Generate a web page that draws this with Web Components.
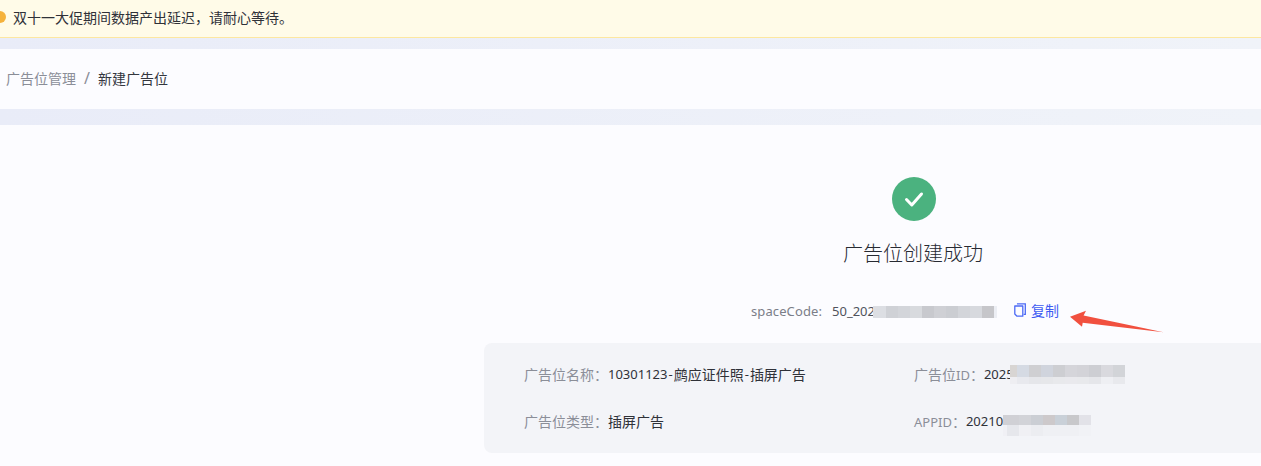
<!DOCTYPE html>
<html><head><meta charset="utf-8">
<style>
html,body{margin:0;padding:0;background:#fcfcff;}
body{width:1261px;height:466px;overflow:hidden;font-family:"Noto Sans","Noto Sans CJK SC",sans-serif;}
</style></head>
<body>
<app-page></app-page>
<script>
const FONT='"Noto Sans","Noto Sans CJK SC",sans-serif';
function def(name,html,init){
  customElements.define(name,class extends HTMLElement{
    constructor(){super();this.attachShadow({mode:'open'}).innerHTML=html;}
    connectedCallback(){if(init)init.call(this);}
  });
}
def('notice-bar',`<style>
:host{display:flex;align-items:center;gap:7px;box-sizing:border-box;height:38px;padding-bottom:3px;background:#fffbe8;border-bottom:1px solid #fde7a0;font:14px ${FONT};color:#2f3138;overflow:hidden}
i{display:block;width:12px;height:12px;border-radius:50%;background:#f5b23c;margin-left:-6px;flex:none}
</style><i></i><slot></slot>`);
def('band-gap',`<style>:host{display:block;height:var(--h,11px);background:linear-gradient(90deg,#e9ecf8,#f0f3f9)}</style>`);
def('bread-crumb',`<style>
:host{display:flex;align-items:center;box-sizing:border-box;height:60px;padding:0 0 2px 6px;background:#fcfcff;font:14px ${FONT};color:#8b8e98}
span.s{margin:0 8px;width:6px;text-align:center;font-size:16px;line-height:16px}
b{font-weight:400;color:#33363e}
</style>广告位管理<span class="s">/</span><b>新建广告位</b>`);
def('pixel-blur',`<style>
:host{display:block;flex:none}
div{display:flex}
i{display:block}
</style><span id="r"></span>`,function(){
  const r=this.shadowRoot.getElementById('r');
  r.style.display='contents';
  JSON.parse(this.getAttribute('data')).forEach(row=>{
    const d=document.createElement('div');d.style.height=row.h+'px';
    row.c.forEach(([w,c])=>{const i=document.createElement('i');i.style.width=w+'px';i.style.background=c;d.appendChild(i);});
    r.appendChild(d);
  });
});
def('result-head',`<style>
:host{display:flex;flex-direction:column;align-items:center}
svg{display:block}
h2{margin:18px 2px 2px 0;font:300 20px/30px ${FONT};color:#272a32}
</style>
<svg width="44" height="44" viewBox="0 0 44 44"><circle cx="22" cy="22" r="22" fill="#4bb27f"/><path d="M14.5 22.5l5.3 5.5 9.7-11" fill="none" stroke="#fff" stroke-width="3" stroke-linecap="round" stroke-linejoin="round"/></svg>
<h2><slot></slot></h2>`);
def('code-line',`<style>
:host{display:flex;align-items:center;justify-content:center;box-sizing:border-box;height:24px;padding-right:18px;font:13px ${FONT};color:#50535c}
.k{color:#7b7e88;margin-right:10px;letter-spacing:.1px}
::slotted(pixel-blur){margin:1px 0 0 -2px}
a{display:flex;align-items:center;gap:5px;color:#3e5bf2;margin:-2px 0 0 17px;font-size:14px;text-decoration:none}
svg{display:block}
</style><span class="k">spaceCode:</span><span>50_202</span><slot></slot>
<a><svg width="12" height="14" viewBox="0 0 12 14" fill="none" stroke="#4c6af5" stroke-width="1.3"><path d="M3.6 1.6V.8h7.7v10.5H9.6"/><path d="M.8 3h8v10.2H3L.8 11z" stroke-linejoin="round"/></svg>复制</a>`);
def('info-card',`<style>
:host{display:grid;grid-template-columns:390px 1fr;grid-auto-rows:47px;align-content:center;box-sizing:border-box;height:110px;width:860px;padding:0 0 2px 40px;background:#f3f4f8;border-radius:8px;font:14px ${FONT}}
</style><slot></slot>`);
def('info-item',`<style>
:host{display:flex;align-items:center;font:14px ${FONT};color:#2f3138;white-space:nowrap}
.k{color:#8b8e98}
</style><span class="k"><slot name="k"></slot></span><slot></slot>`);
def('app-page',`<style>
:host{display:block;width:1261px;height:466px;position:relative;overflow:hidden}
main{display:flex;flex-direction:column;margin-left:484px;width:860px;padding-top:52px}
code-line{margin-top:28px}
info-card{margin-top:20px}
.l{font-size:13px}
.h{font-size:13px;margin:0 1px}
pixel-blur.id{margin:1px 0 0 -4px}
pixel-blur.app{margin-top:9px}
svg.arrow{position:absolute;left:0;top:0;pointer-events:none}
</style>
<notice-bar>双十一大促期间数据产出延迟，请耐心等待。</notice-bar>
<band-gap></band-gap>
<bread-crumb></bread-crumb>
<band-gap style="--h:16px"></band-gap>
<main>
<result-head>广告位创建成功</result-head>
<code-line><pixel-blur data='[{"h":12,"c":[[13,"#dcdee3"],[12,"#cfd1d6"],[12,"#d3d5da"],[12,"#d8dade"],[12,"#c8c9ce"],[12,"#cfd0d5"],[12,"#cbcdd2"],[12,"#d3d5da"],[12,"#d7d9de"],[12,"#c6c6ca"],[3,"#eceef4"]]}]'></pixel-blur></code-line>
<info-card>
<info-item><span slot="k">广告位名称：</span><span class="l">10301123</span><span class="h">-</span>鹧应证件照<span class="h">-</span>插屏广告</info-item>
<info-item><span slot="k">广告位<span class="l">ID</span>：</span><span class="l">2025</span><pixel-blur class="id" data='[{"h":12,"c":[[7,"#d8d5d3"],[12,"#d5dae3"],[12,"#cfcfd2"],[12,"#d0d4dd"],[12,"#cdced2"],[12,"#d5d5da"],[12,"#d3d3d8"],[12,"#cdced3"],[12,"#d9d9de"],[12,"#d2d4d8"]]},{"h":7,"c":[[7,"#eeeef2"],[12,"#e8e9ee"],[12,"#e5e6ea"],[12,"#e6e7ea"],[12,"#e8e9ec"],[12,"#e9e9ed"],[12,"#e8e9ec"],[12,"#e5e6ea"],[12,"#eeeff3"],[12,"#e8e9ed"]]}]'></pixel-blur></info-item>
<info-item><span slot="k">广告位类型：</span>插屏广告</info-item>
<info-item><span slot="k"><span class="l">APPID</span>：</span><span class="l">20210</span><pixel-blur class="app" data='[{"h":10,"c":[[16,"#d0d0d5"],[12,"#d2d3d8"],[12,"#cbced4"],[12,"#cdc9cb"],[12,"#c9d0d8"],[12,"#c8c8cb"],[12,"#e2e2e8"]]},{"h":11,"c":[[4,"#f0f0f5"],[12,"#e6e7ec"],[12,"#f0f0f4"],[12,"#ecedf1"],[12,"#eff0f4"],[12,"#eff0f4"],[12,"#eff0f4"],[12,"#f1f2f6"]]}]'></pixel-blur></info-item>
</info-card>
</main>
<svg class="arrow" width="1261" height="466"><polygon points="1070,316.7 1086,310.7 1083.6,315.6 1163.5,332.3 1082.7,322.7 1082,326.7" fill="#f1503f"/></svg>`);
</script>
</body></html>
